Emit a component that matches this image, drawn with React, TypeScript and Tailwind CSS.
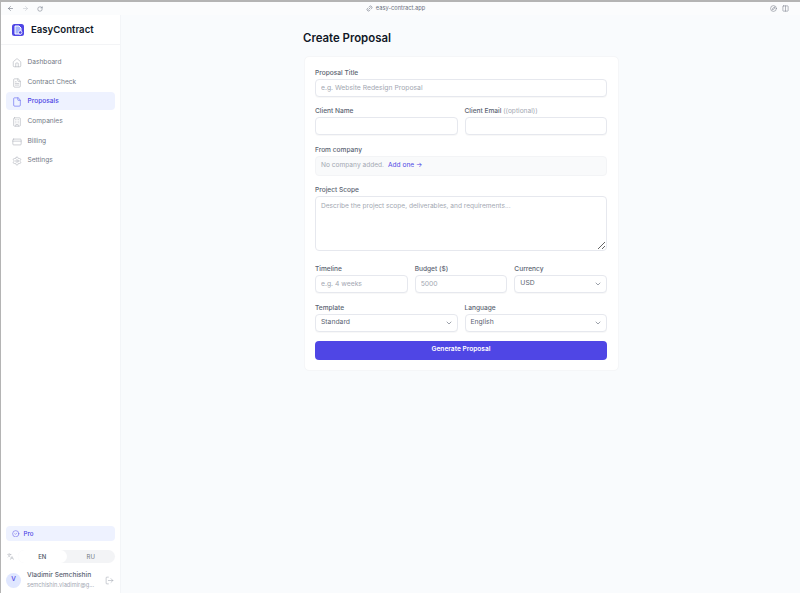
import { ArrowLeft, ArrowRight, RotateCw, Link2, Home, FileText, File, Building, CreditCard, Settings, CheckCircle2, Languages, LogOut, ChevronDown, Columns2, Compass } from 'lucide-react';

const navItems = [
  { label: 'Dashboard', icon: Home },
  { label: 'Contract Check', icon: FileText },
  { label: 'Proposals', icon: File, active: true },
  { label: 'Companies', icon: Building },
  { label: 'Billing', icon: CreditCard },
  { label: 'Settings', icon: Settings },
];

const inputClass =
  'block w-full h-[18px] rounded-[4px] border border-[#e6e8ee] bg-white px-[5px] text-[6.8px] text-[#5b6472] placeholder-[#a3a8b2] shadow-[0_1px_1px_rgba(0,0,0,0.03)] outline-none';

function Label({ children }: { children: React.ReactNode }) {
  return <label className="block h-[8px] mb-[3px] leading-[10px] text-[6.6px] font-medium text-[#5b6472]">{children}</label>;
}

function Select({ value }: { value: string }) {
  return (
    <div className={`${inputClass} flex items-center justify-between`}>
      <span>{value}</span>
      <ChevronDown className="w-[8px] h-[8px] -mr-[1px] text-[#6b7280]" strokeWidth={2} />
    </div>
  );
}

export default function App() {
  return (
    <div className="h-[593px] w-[800px] overflow-hidden flex flex-col bg-[#f9fbfd] border-l border-t-2 border-[#b4b4b4] text-[#111827] font-['Inter',sans-serif]">
      {/* Browser bar */}
      <div className="relative h-[13px] shrink-0 flex items-center px-[6px] bg-[#fbfcfd]">
        <div className="flex items-center gap-[8px] text-[#6b7280]">
          <ArrowLeft className="w-[7px] h-[7px]" />
          <ArrowRight className="w-[7px] h-[7px] text-[#c5c8ce]" />
          <RotateCw className="w-[6px] h-[6px]" />
        </div>
        <div className="flex-1 flex items-center justify-center gap-[3px] pr-[22px] text-[5.7px] text-[#6b7280]">
          <Link2 className="w-[7px] h-[7px] -rotate-45" />
          <span>easy-contract.app</span>
        </div>
        <div className="flex items-center gap-[5px] mr-[5px] text-[#808590]">
          <Compass className="w-[7px] h-[7px]" />
          <Columns2 className="w-[7px] h-[7px]" />
        </div>
      </div>

      <div className="flex flex-1 min-h-0">
        {/* Sidebar */}
        <aside className="w-[120px] shrink-0 flex flex-col bg-white border-r border-[#f3f5f8]">
          <div className="h-[30px] pt-[1px] flex items-center gap-[7px] px-[11px] border-b border-[#f3f4f6]">
            <svg viewBox="0 0 24 24" className="w-[12px] h-[12px]">
              <rect width="24" height="24" rx="5" fill="#4f46e5" />
              <path d="M6 4h8l4 4v12H6z" fill="#a5b4fc" stroke="#fff" strokeWidth="2" />
              <circle cx="16.5" cy="17" r="3.5" fill="#4f46e5" stroke="#fff" strokeWidth="1.6" />
            </svg>
            <span className="text-[9.6px] font-semibold text-[#111827]">EasyContract</span>
          </div>
          <nav className="flex flex-col gap-[2px] px-[5px] pt-[8px]">
            {navItems.map(({ label, icon: Icon, active }) => (
              <div
                key={label}
                className={`h-[17.7px] pt-[2px] flex items-center gap-[5.5px] px-[6px] rounded-[4px] text-[6.6px] ${
                  active ? 'bg-[#eef2ff] text-[#4f46e5] font-medium' : 'text-[#737985]'
                }`}
              >
                <Icon className={`w-[10px] h-[10px] ${active ? 'text-[#6366f1]' : 'text-[#b0b4bc]'}`} strokeWidth={1.5} />
                {label}
              </div>
            ))}
          </nav>
          <div className="mt-auto px-[5px] pb-[3px]">
            <div className="h-[15px] flex items-center gap-[4px] px-[6px] rounded-[4px] bg-[#eef2ff] text-[6.2px] font-medium text-[#4f46e5]">
              <CheckCircle2 className="w-[7.5px] h-[7.5px]" strokeWidth={1.5} />
              Pro
            </div>
            <div className="mt-[9px] flex items-center gap-[4px]">
              <Languages className="w-[7px] h-[7px] ml-[1px] -mt-[1px] text-[#a3a8b2]" strokeWidth={1.5} />
              <div className="flex-1 h-[13px] flex rounded-full bg-[#f3f4f6] text-[6px] text-[#737985]">
                <div className="flex-1 flex items-center justify-center rounded-full bg-white font-medium text-[#4b5563]">EN</div>
                <div className="flex-1 flex items-center justify-center">RU</div>
              </div>
            </div>
            <div className="mt-[6px] h-[21px] pt-[1px] flex items-center gap-[6px]">
              <div className="w-[15px] h-[15px] shrink-0 flex items-center justify-center rounded-full bg-[#e0e7ff] text-[6.5px] font-medium text-[#4f46e5]">V</div>
              <div className="flex-1 min-w-0">
                <div className="text-[6.6px] leading-[9.5px] font-medium text-[#5b6472] whitespace-nowrap">Vladimir Semchishin</div>
                <div className="text-[5.7px] leading-[8px] text-[#a3a8b2] whitespace-nowrap">semchishin.vladimir@g...</div>
              </div>
              <LogOut className="w-[9px] h-[9px] mr-[1px] text-[#a3a8b2]" strokeWidth={1.5} />
            </div>
          </div>
        </aside>

        {/* Main */}
        <main className="flex-1 min-w-0 pl-[182px] pt-[14.5px]">
          <h1 className="h-[16px] leading-[16px] text-[11.4px] font-semibold text-[#111827]">Create Proposal</h1>
          <form className="mt-[10.5px] w-[315px] ml-[0.5px] flex flex-col gap-[9.5px] rounded-[5px] bg-white border border-[#f5f6f8] pl-[10.5px] pr-[10.5px] pt-[10.5px] pb-[10px]">
            <div>
              <Label>Proposal Title</Label>
              <input className={inputClass} placeholder="e.g. Website Redesign Proposal" />
            </div>
            <div className="grid grid-cols-2 gap-[7px]">
              <div>
                <Label>Client Name</Label>
                <input className={inputClass} />
              </div>
              <div>
                <Label>
                  Client Email <span className="font-normal text-[#a3a8b2]">((optional))</span>
                </Label>
                <input className={inputClass} />
              </div>
            </div>
            <div>
              <Label>From company</Label>
              <div className="h-[20px] flex items-center gap-[4px] px-[5px] rounded-[4px] border border-[#f3f4f6] bg-[#f9fafb] text-[6.6px] text-[#a3a8b2]">
                No company added.
                <span className="text-[#4f46e5]">Add one →</span>
              </div>
            </div>
            <div>
              <Label>Project Scope</Label>
              <textarea
                className="block w-full h-[55px] rounded-[4px] border border-[#e6e8ee] bg-white px-[5px] py-[4px] text-[6.6px] leading-[10px] placeholder-[#a3a8b2] outline-none"
                placeholder="Describe the project scope, deliverables, and requirements..."
              />
            </div>
            <div className="mt-[3px] grid grid-cols-3 gap-[7px]">
              <div>
                <Label>Timeline</Label>
                <input className={inputClass} placeholder="e.g. 4 weeks" />
              </div>
              <div>
                <Label>Budget ($)</Label>
                <input className={inputClass} placeholder="5000" />
              </div>
              <div>
                <Label>Currency</Label>
                <Select value="USD" />
              </div>
            </div>
            <div className="mt-[0.5px] grid grid-cols-2 gap-[7px]">
              <div>
                <Label>Template</Label>
                <Select value="Standard" />
              </div>
              <div>
                <Label>Language</Label>
                <Select value="English" />
              </div>
            </div>
            <button type="button" className="-mt-[0.5px] h-[19px] rounded-[4px] bg-[#4f46e5] text-[6.6px] font-semibold text-white">
              Generate Proposal
            </button>
          </form>
        </main>
      </div>
    </div>
  );
}
